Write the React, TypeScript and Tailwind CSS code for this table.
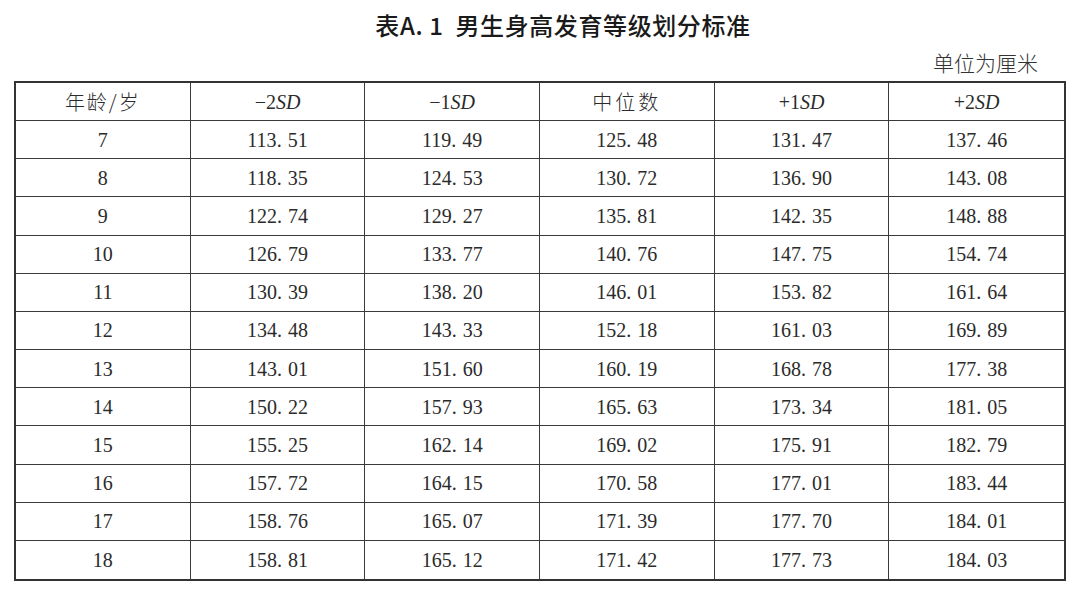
import React from "react";

const rows: string[][] = [
  ["7", "113.51", "119.49", "125.48", "131.47", "137.46"],
  ["8", "118.35", "124.53", "130.72", "136.90", "143.08"],
  ["9", "122.74", "129.27", "135.81", "142.35", "148.88"],
  ["10", "126.79", "133.77", "140.76", "147.75", "154.74"],
  ["11", "130.39", "138.20", "146.01", "153.82", "161.64"],
  ["12", "134.48", "143.33", "152.18", "161.03", "169.89"],
  ["13", "143.01", "151.60", "160.19", "168.78", "177.38"],
  ["14", "150.22", "157.93", "165.63", "173.34", "181.05"],
  ["15", "155.25", "162.14", "169.02", "175.91", "182.79"],
  ["16", "157.72", "164.15", "170.58", "177.01", "183.44"],
  ["17", "158.76", "165.07", "171.39", "177.70", "184.01"],
  ["18", "158.81", "165.12", "171.42", "177.73", "184.03"],
];

const serif = "font-['Liberation_Serif','Noto_Sans_CJK_SC',serif]";

function Num({ v }: { v: string }) {
  const i = v.indexOf(".");
  if (i < 0) return <span>{v}</span>;
  return (
    <span className="whitespace-nowrap">
      {v.slice(0, i)}
      <span className="inline-block w-[11px] text-left">.</span>
      {v.slice(i + 1)}
    </span>
  );
}

function SdHead({ sign, n }: { sign: string; n: string }) {
  return (
    <span className={`${serif} text-[20px]`}>
      {sign}
      {n}
      <span className="italic">SD</span>
    </span>
  );
}

export default function App() {
  const cell = (col: number, row: number) =>
    `flex items-center justify-center ${col < 5 ? "border-r border-r-[#3a3a3a]" : ""} ${
      row < 12 ? "border-b border-b-[#3a3a3a]" : ""
    }`;

  return (
    <div className="w-[1080px] h-[592px] bg-white text-[#2b2b2b] overflow-hidden">
      <div className="h-[50px] flex items-center justify-center pl-[46px]">
        <h1 className="text-[24px] font-medium font-['Noto_Sans_CJK_SC',sans-serif] text-[#1a1a1a] leading-none tracking-[0.6px]">
          表A.&nbsp;1&nbsp; 男生身高发育等级划分标准
        </h1>
      </div>
      <div className="h-[24px] flex items-center justify-end pr-[42px]">
        <span className="text-[21px] leading-none font-['Noto_Sans_CJK_SC',sans-serif] font-light text-[#333]">
          单位为厘米
        </span>
      </div>
      <div className="mt-[7px] ml-[14px] w-[1052px] h-[500px] border-2 border-[#333] grid grid-cols-6 grid-rows-13">
        <div className={cell(0, 0)}>
          <span className="text-[20px] font-['Noto_Sans_CJK_SC',sans-serif] font-light tracking-[2px]">年龄/岁</span>
        </div>
        <div className={cell(1, 0)}>
          <SdHead sign="−" n="2" />
        </div>
        <div className={cell(2, 0)}>
          <SdHead sign="−" n="1" />
        </div>
        <div className={cell(3, 0)}>
          <span className="text-[20px] font-['Noto_Sans_CJK_SC',sans-serif] font-light tracking-[3px]">中位数</span>
        </div>
        <div className={cell(4, 0)}>
          <SdHead sign="+" n="1" />
        </div>
        <div className={cell(5, 0)}>
          <SdHead sign="+" n="2" />
        </div>
        {rows.map((r, ri) =>
          r.map((v, ci) => (
            <div key={`${ri}-${ci}`} className={`${cell(ci, ri + 1)} ${serif} text-[20px]`}>
              <Num v={v} />
            </div>
          ))
        )}
      </div>
    </div>
  );
}
